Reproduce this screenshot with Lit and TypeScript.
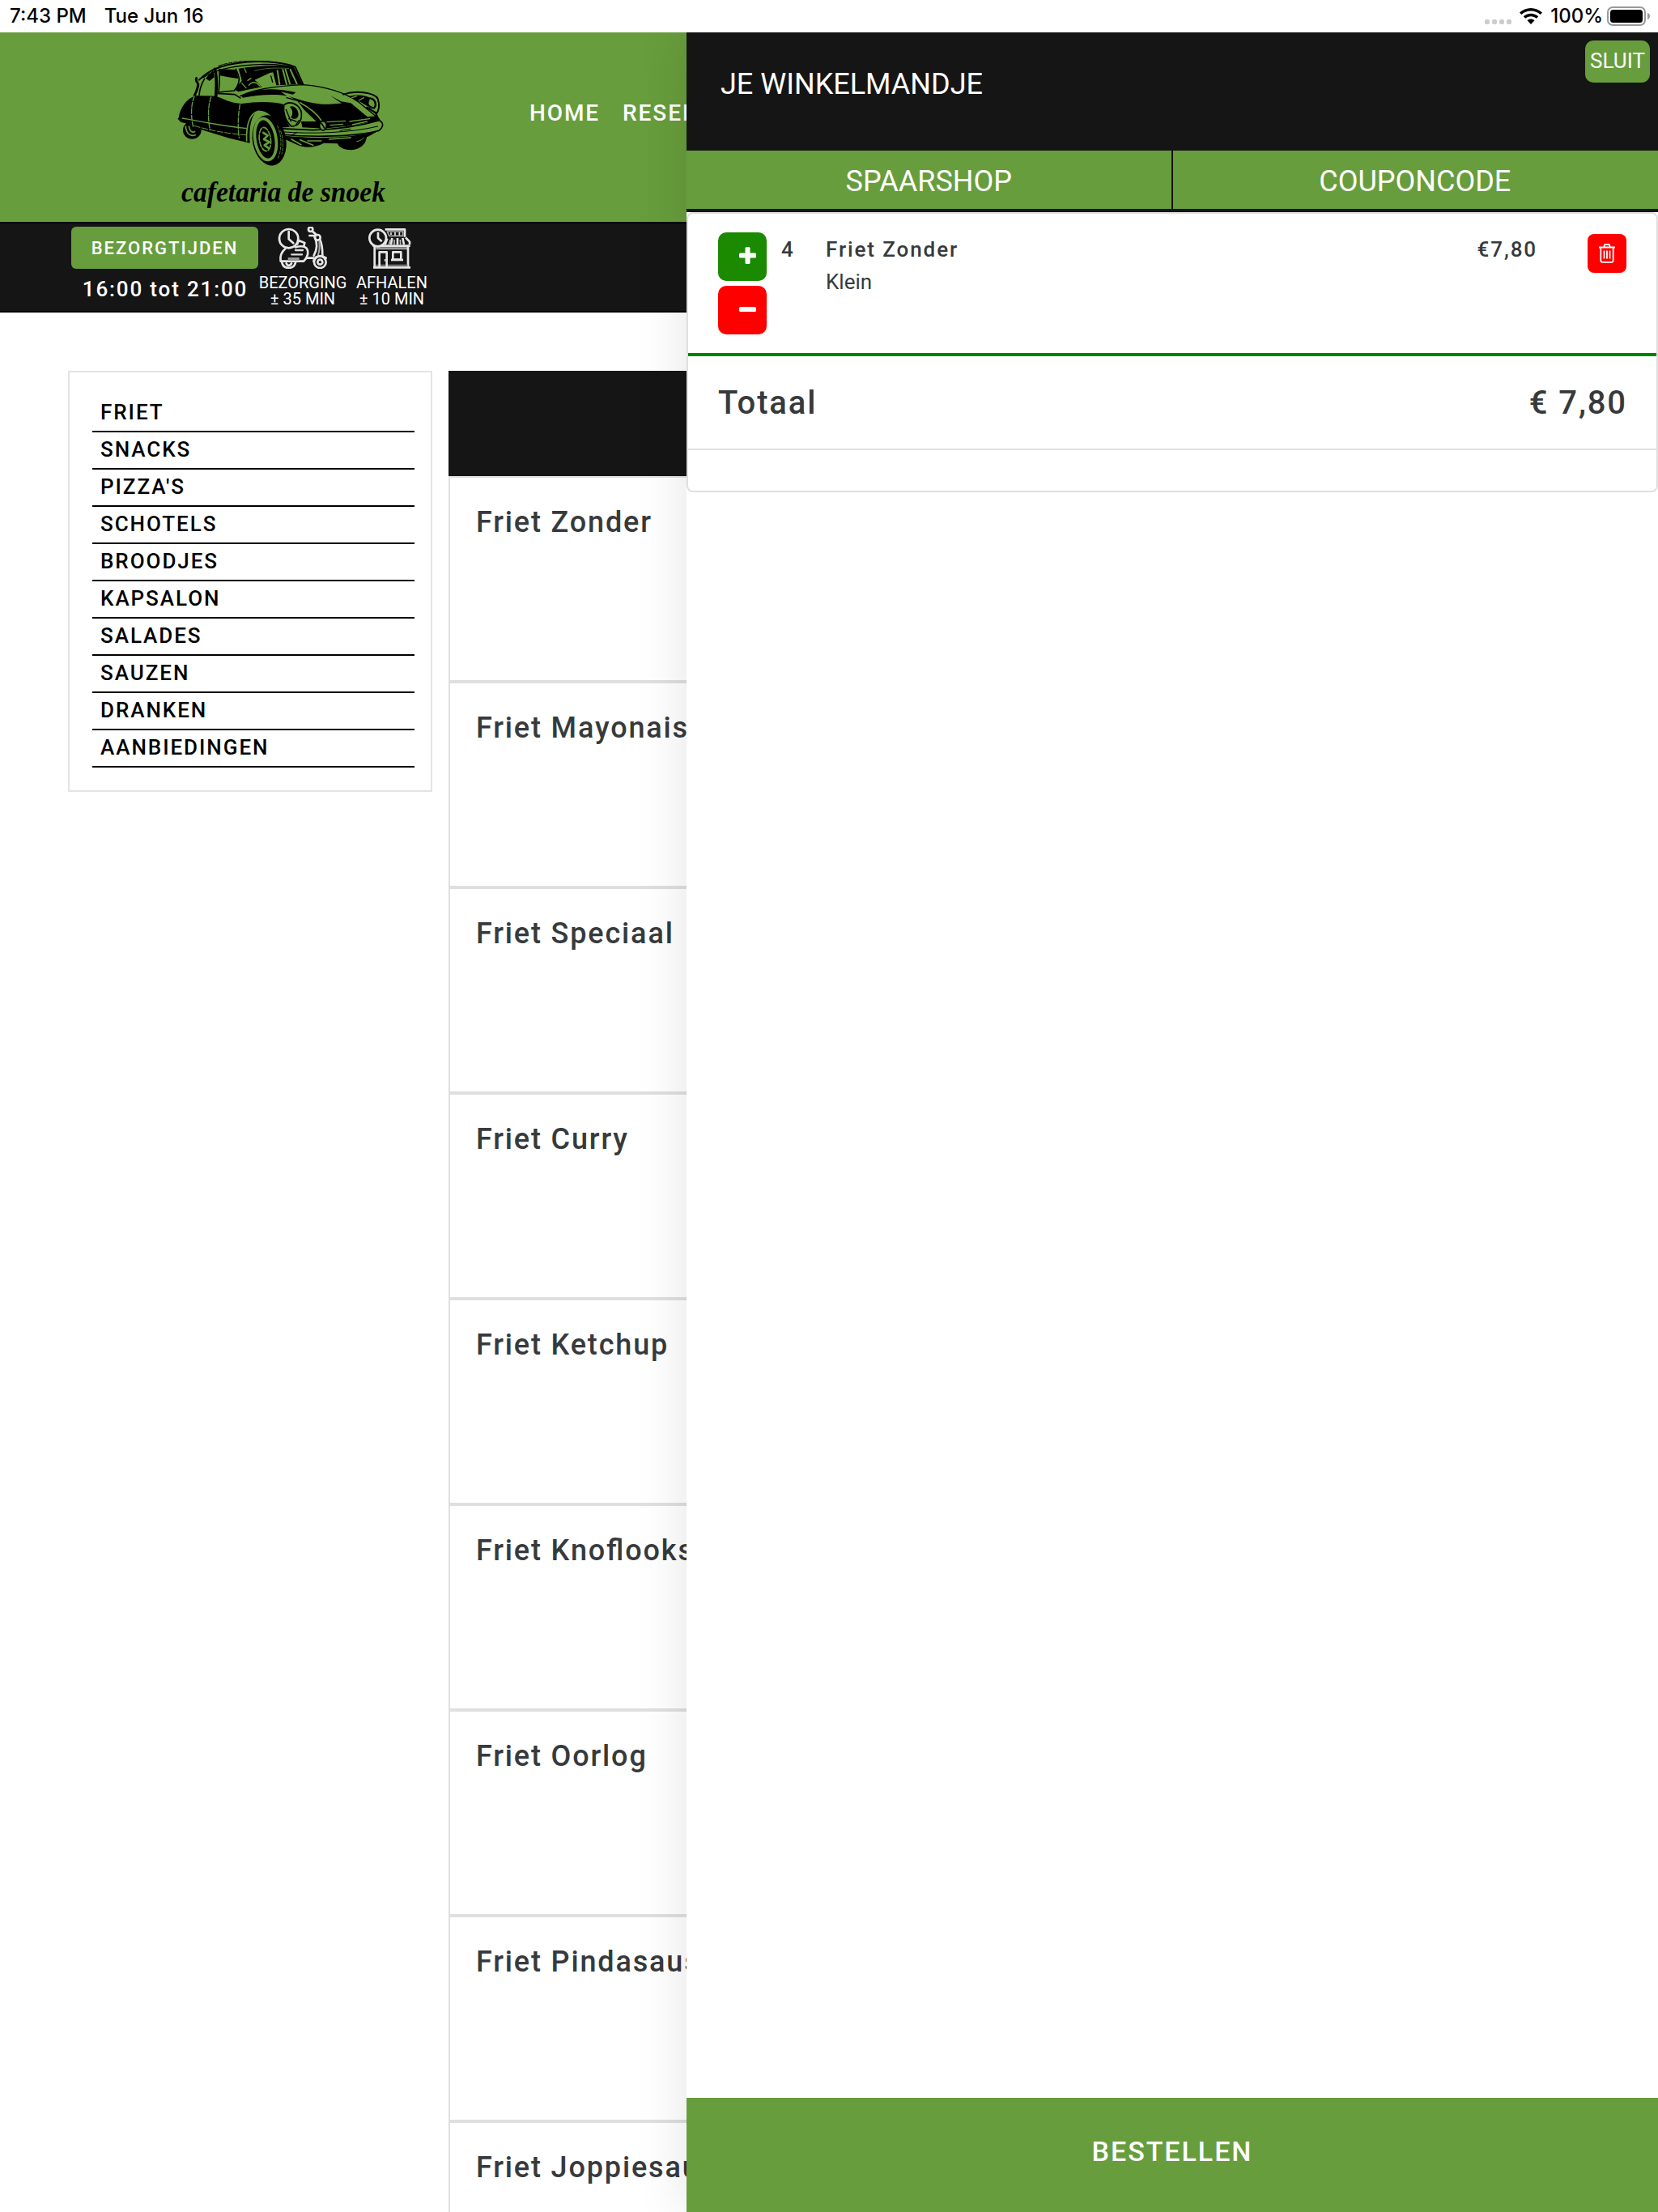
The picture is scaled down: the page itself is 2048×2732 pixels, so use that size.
import { LitElement, css, html, svg } from 'lit';
import { customElement, property } from 'lit/decorators.js';

interface CartLine {
  quantity: number;
  name: string;
  variant: string;
  price: string;
}

const CATEGORIES = [
  'Friet',
  'Snacks',
  "Pizza's",
  'Schotels',
  'Broodjes',
  'Kapsalon',
  'Salades',
  'Sauzen',
  'Dranken',
  'Aanbiedingen',
];

const PRODUCTS = [
  'Friet Zonder',
  'Friet Mayonaise',
  'Friet Speciaal',
  'Friet Curry',
  'Friet Ketchup',
  'Friet Knoflooksaus',
  'Friet Oorlog',
  'Friet Pindasaus',
  'Friet Joppiesaus',
];

const CART: CartLine[] = [{ quantity: 4, name: 'Friet Zonder', variant: 'Klein', price: '€7,80' }];

const scooterIcon = svg`
  <svg class="icon" width="62" height="52" viewBox="24 18 186 156" fill="none" stroke="#e6e6e6" stroke-width="8" stroke-linecap="round" stroke-linejoin="round">
    <circle cx="65" cy="62" r="35" />
    <path d="M65 36V64L82 79" />
    <path d="M97 82L102 69L124 78L121 90" />
    <path d="M52 100C38 112 32 128 35 146H120C134 134 141 112 131 98C122 88 102 90 90 94" />
    <path d="M90 105H117M76 121H114" stroke="#ddd" stroke-width="7" />
    <path d="M62 138H104" stroke="#999" stroke-width="12" stroke-linecap="butt" />
    <path d="M40 152C46 176 82 178 90 152M56 154C60 164 70 164 75 154" />
    <circle cx="146" cy="28" r="8" />
    <path d="M152 35L166 46M142 51H160" />
    <circle cx="172" cy="58" r="10" />
    <path d="M160 54C172 78 172 100 158 125M181 66C190 86 190 106 190 124" />
    <path d="M178 72C180 92 179 108 174 122" stroke="#aaa" stroke-width="6" />
    <path d="M134 134H156" />
    <circle cx="181" cy="149" r="22" />
    <circle cx="181" cy="149" r="9" />
    <path d="M157 146C160 126 184 120 203 134" />
  </svg>
`;

const storeIcon = svg`
  <svg class="icon" width="54" height="52" viewBox="362 18 162 156" fill="none" stroke="#e6e6e6" stroke-width="8" stroke-linejoin="round">
    <path d="M424 28H497V56" />
    <path d="M432 36H490V52H440Z" stroke="#aaa" stroke-width="5" />
    <path d="M446 40V48M461 38V50M477 38V50" stroke-width="5" />
    <path d="M432 62L424 84M450 60L446 84M470 60V84M489 60L494 84M500 58L515 74V84" />
    <path d="M438 84L444 66M458 84V66M481 84L480 66" stroke="#bbb" stroke-width="5" />
    <path d="M378 89H517" />
    <path d="M390 98H508" stroke="#999" stroke-width="9" />
    <path d="M385 90V169M509 90V169M380 169H518" />
    <path d="M390 161H508" stroke="#888" stroke-width="5" />
    <path d="M403 166V112H430V166" />
    <path d="M424 138V146" stroke-width="5" />
    <path d="M453 112H483V140H453Z" />
    <path d="M446 141H491" />
    <circle cx="397" cy="60" r="31" fill="#151515" />
    <path d="M398 38V60L412 73" />
  </svg>
`;

const logo = svg`
  <svg class="logo" width="300" height="220" viewBox="0 0 900 660" fill="none" stroke-linecap="round" stroke-linejoin="round">
    <!-- far wheels -->
    <ellipse cx="112" cy="332" rx="34" ry="33" fill="#000" />
    <path d="M88 318C90 348 108 356 124 350M100 318C102 336 112 342 122 338" stroke="#679d3c" stroke-width="5" />
    <path d="M650 378L760 350C758 382 740 402 700 406C672 405 652 394 650 378Z" fill="#000" />
    <path d="M722 374C736 372 744 366 750 358" stroke="#679d3c" stroke-width="3" />

    <!-- roof and glass -->
    <path d="M138 146C170 112 215 92 280 84C350 72 440 78 494 98L522 160" stroke="#000" stroke-width="6" />
    <path d="M152 138C205 100 300 90 380 88C430 88 470 94 486 104" stroke="#000" stroke-width="4" />
    <path d="M210 94C260 76 350 70 440 84" stroke="#000" stroke-width="3" stroke-dasharray="14 5" />
    <path d="M128 140C122 152 138 156 134 168C130 186 126 194 120 206" stroke="#000" stroke-width="9" />
    <path d="M158 142C148 158 140 178 138 202" stroke="#000" stroke-width="5" />
    <path d="M162 140L190 110L194 136L176 150Z" fill="#000" />
    <path d="M196 106C206 140 202 170 200 206" stroke="#000" stroke-width="11" />
    <path d="M214 106L276 108L284 142L246 136L216 130Z" fill="#000" />
    <path d="M212 106C216 140 212 170 210 192L268 186C282 170 290 150 284 128L274 106" stroke="#000" stroke-width="5" />
    <path d="M284 104C350 94 430 90 488 96L520 162L424 166L412 118L400 120L344 146L372 172L318 182L284 190L268 182L296 150Z" fill="#000" />
    <path d="M346 146L402 122L412 166L370 172Z" fill="#679d3c" />
    <path d="M280 104L292 142M296 158L312 176M306 104L312 118M318 148L330 140M322 166C334 150 350 152 364 170" stroke="#679d3c" stroke-width="4" />
    <path d="M404 132L410 154" stroke="#000" stroke-width="4" />
    <path d="M428 112L436 162M448 108L462 162M458 108L474 160M476 108L500 160" stroke="#679d3c" stroke-width="6" />
    <path d="M344 112C380 102 430 100 470 104" stroke="#679d3c" stroke-width="2" />

    <!-- body side -->
    <path d="M62 288C66 250 92 214 126 204L200 206C226 214 252 232 296 234C350 226 410 224 456 238L452 262L460 296L474 320L430 324C412 282 386 262 360 262C332 268 322 320 326 380L250 362L152 332L66 298Z" fill="#000" />
    <path d="M62 290L72 300L322 350" stroke="#000" stroke-width="6" />
    <path d="M204 196L270 200L292 214" stroke="#000" stroke-width="5" />
    <path d="M120 206C106 240 108 290 116 320M182 210C168 250 172 300 178 330M294 214C282 262 280 320 286 360" stroke="#679d3c" stroke-width="4" stroke-dasharray="18 6" />
    <path d="M76 288C150 302 230 318 316 326" stroke="#679d3c" stroke-width="4" />
    <path d="M120 316C180 334 250 346 312 350" stroke="#679d3c" stroke-width="3" stroke-dasharray="22 7" />
    <path d="M314 372C312 320 322 270 358 262C392 262 416 290 428 322" stroke="#679d3c" stroke-width="5" />

    <!-- bonnet -->
    <path d="M290 206C340 180 440 168 524 164C600 170 672 190 726 226L806 292" stroke="#000" stroke-width="4" />
    <path d="M294 206C340 176 420 174 496 192L486 200L440 190L464 206C410 196 350 204 300 212Z" fill="#000" />
    <path d="M470 206C530 226 570 238 620 236L680 232L736 286L608 298L576 304L528 258L500 222Z" fill="#000" />
    <path d="M624 204L664 226L700 232L768 288L734 288L690 250Z" fill="#000" />
    <path d="M512 230C548 250 574 270 590 296" stroke="#679d3c" stroke-width="5" />
    <path d="M462 212L500 222" stroke="#000" stroke-width="4" />

    <!-- headlights -->
    <path d="M452 240C470 222 504 232 516 262C522 296 506 318 480 318C458 300 448 266 452 240Z" fill="#679d3c" stroke="#000" stroke-width="5" />
    <path d="M474 246C490 238 506 256 506 276C502 292 492 294 478 286C486 270 486 260 474 246Z" fill="#000" />
    <path d="M460 256L478 300M470 290L498 300M508 296L494 316" stroke="#000" stroke-width="4" />
    <path d="M672 200C716 184 786 192 800 216C808 240 804 262 794 272" stroke="#000" stroke-width="6" />
    <path d="M690 208C720 198 752 202 772 212L762 244L740 230Z" fill="#000" />
    <path d="M704 212L722 206M730 222L748 212" stroke="#679d3c" stroke-width="4" />
    <path d="M772 214C792 218 796 240 786 250C774 250 764 242 764 236M760 248L792 268L802 292" stroke="#000" stroke-width="7" />

    <!-- grille and bumper -->
    <path d="M516 300L580 300L600 294L800 280L806 296L700 316L600 326L520 322Z" fill="#000" />
    <path d="M612 302L680 298M624 314L670 310M696 300L770 290M706 312L760 300" stroke="#679d3c" stroke-width="4" />
    <path d="M426 326L560 332C640 330 730 318 806 296C824 306 820 322 804 334C720 356 560 360 440 348Z" fill="#679d3c" stroke="#000" stroke-width="5" />
    <path d="M440 338C560 348 700 342 800 318M480 352L500 340M660 334L700 328" stroke="#000" stroke-width="3" />
    <ellipse cx="597" cy="316" rx="13" ry="17" fill="#679d3c" stroke="#000" stroke-width="5" />
    <path d="M592 308L602 324M684 304V322" stroke="#000" stroke-width="5" />
    <path d="M446 352C560 366 690 364 800 336L764 356L650 382L600 380C570 396 530 400 504 388L456 366Z" fill="#000" />
    <path d="M480 366L516 386M512 368L560 388M540 372L590 372M620 366L700 360" stroke="#679d3c" stroke-width="5" />

    <!-- front wheel -->
    <ellipse cx="398" cy="370" rx="62" ry="94" transform="rotate(-10 398 370)" fill="#000" />
    <ellipse cx="384" cy="366" rx="39" ry="77" transform="rotate(-9 384 366)" stroke="#679d3c" stroke-width="11" />
    <ellipse cx="382" cy="366" rx="21" ry="44" transform="rotate(-8 382 366)" stroke="#679d3c" stroke-width="5" stroke-dasharray="20 6" />
    <path d="M376 342L392 352L378 366L398 376L380 388L394 398" stroke="#679d3c" stroke-width="8" />
    <path d="M428 316C444 352 446 400 430 436M440 336C452 370 450 400 444 420" stroke="#679d3c" stroke-width="2.5" stroke-dasharray="10 6" />

    <text class="logo-text" x="72" y="596" textLength="756" lengthAdjust="spacingAndGlyphs">cafetaria de snoek</text>
  </svg>
`;

/**
 * Tablet status bar with clock, wifi and battery.
 */
@customElement('status-bar')
export class StatusBar extends LitElement {
  static styles = css`
    :host {
      display: flex;
      align-items: center;
      justify-content: space-between;
      box-sizing: border-box;
      height: 40px;
      padding: 0 10px 0 12px;
      background: #fff;
      color: #000;
      font: 500 24px/40px Inter, sans-serif;
    }

    .side {
      display: flex;
      align-items: center;
      height: 40px;
    }

    .clock {
      gap: 22px;
    }

    .label {
      height: 40px;
    }

    .signal {
      display: flex;
      gap: 3px;
      margin: 14px 10px 0 0;
    }

    .dot {
      width: 6px;
      height: 6px;
      border-radius: 2px;
      background: #ccc;
    }

    .wifi {
      margin-right: 10px;
    }

    .battery {
      margin-left: 5px;
    }
  `;

  render() {
    return html`
      <div class="side clock">
        <span class="label">7:43 PM</span>
        <span class="label">Tue Jun 16</span>
      </div>
      <div class="side">
        <div class="signal">
          <span class="dot"></span><span class="dot"></span><span class="dot"></span><span class="dot"></span>
        </div>
        <svg class="wifi" width="28" height="20" viewBox="0 0 28 20">
          <path d="M14 0C8.600 0 3.700 2.100 0 5.500L2.400 8C5.500 5.200 9.500 3.600 14 3.600S22.500 5.200 25.600 8L28 5.500C24.300 2.100 19.400 0 14 0Z" />
          <path d="M14 6.800C10.500 6.800 7.300 8.100 4.800 10.300L7.200 12.800C9 11.200 11.400 10.300 14 10.300S19 11.200 20.800 12.800L23.200 10.300C20.700 8.100 17.500 6.800 14 6.800Z" />
          <path d="M14 13.500C12.300 13.500 10.700 14.100 9.500 15.200L14 20L18.500 15.200C17.300 14.100 15.700 13.500 14 13.500Z" />
        </svg>
        <span class="label">100%</span>
        <svg class="battery" width="53" height="24" viewBox="0 0 53 24">
          <rect x="1" y="1" width="46" height="22" rx="6" fill="none" stroke="#999" stroke-width="2" />
          <rect x="4" y="4" width="40" height="16" rx="3.500" />
          <path d="M50 8C52 8.500 53 10 53 12S52 15.500 50 16Z" fill="#999" />
        </svg>
      </div>
    `;
  }
}

/**
 * Shopping cart drawer that slides over the menu.
 */
@customElement('cart-drawer')
export class CartDrawer extends LitElement {
  @property({ type: Array }) lines: CartLine[] = [];
  @property({ type: String }) total = '';

  static styles = css`
    :host {
      display: flex;
      flex-direction: column;
      background: #fff;
      color: #373a3c;
      box-shadow: 0 0 60px rgba(0, 0, 0, 0.11);
    }

    .header {
      display: flex;
      align-items: flex-start;
      justify-content: space-between;
      box-sizing: border-box;
      height: 146px;
      padding: 10px 10px 0 42px;
      background: #151515;
      color: #fff;
    }

    .title {
      margin: 27px 0 0;
      font-size: 36px;
      font-weight: 400;
      line-height: 54px;
    }

    .close {
      width: 80px;
      height: 52px;
      padding: 0 0 2px;
      border: 0;
      border-radius: 10px;
      background: #679d3c;
      color: #fff;
      font: 400 26px/50px Roboto, sans-serif;
    }

    .tabs {
      display: flex;
      height: 72px;
      border-bottom: 4px solid #151515;
      background: #679d3c;
      color: #fff;
      font-size: 36px;
      line-height: 77px;
      text-align: center;
    }

    .tab {
      flex: 1;
      padding-right: 1px;
    }

    .tab:first-child {
      padding-right: 0;
      border-right: 2px solid #151515;
    }

    .card {
      border: 2px solid #dfdfdf;
      border-radius: 8px;
    }

    .line {
      display: flex;
      align-items: flex-start;
      box-sizing: border-box;
      height: 176px;
      padding: 23px 37px 0;
      border-bottom: 4px solid #008000;
      font-size: 26px;
      line-height: 40px;
    }

    .stepper {
      display: flex;
      flex-direction: column;
      gap: 6px;
      margin-right: 18px;
    }

    .step {
      display: flex;
      width: 60px;
      height: 60px;
      padding: 0;
      border: 0;
      border-radius: 10px;
      background: #1b8a00;
    }

    .step.minus {
      background: #f00;
    }

    .quantity,
    .info,
    .price {
      padding-top: 1px;
      font-weight: 500;
      letter-spacing: 1.9px;
    }

    .quantity {
      width: 55px;
    }

    .info {
      flex: 1;
    }

    .variant {
      font-weight: 400;
      letter-spacing: 0;
    }

    .remove {
      display: flex;
      align-items: center;
      justify-content: center;
      width: 48px;
      height: 48px;
      margin: 2px 0 0 62px;
      padding: 0;
      border: 0;
      border-radius: 8px;
      background: #f00;
    }

    .total {
      display: flex;
      align-items: center;
      justify-content: space-between;
      height: 114px;
      padding: 0 36px 0 37px;
      border-bottom: 2px solid #dfdfdf;
      font-size: 40px;
      font-weight: 500;
      letter-spacing: 1.9px;
    }

    .rest {
      height: 50px;
    }

    .order {
      box-sizing: border-box;
      height: 141px;
      margin-top: auto;
      padding: 0 0 10px;
      border: 0;
      background: #679d3c;
      color: #fff;
      font: 500 34px Roboto, sans-serif;
      letter-spacing: 1.95px;
    }
  `;

  private renderLine(line: CartLine) {
    return html`
      <div class="line">
        <div class="stepper">
          <button class="step">
            <svg width="60" height="60" viewBox="0 0 60 60" fill="#fff">
              <rect x="26" y="25.500" width="21" height="6" rx="1.500" />
              <rect x="33.500" y="18" width="6" height="21" rx="1.500" />
            </svg>
          </button>
          <button class="step minus">
            <svg width="60" height="60" viewBox="0 0 60 60" fill="#fff">
              <rect x="26" y="26" width="21" height="6" rx="1.500" />
            </svg>
          </button>
        </div>
        <div class="quantity">${line.quantity}</div>
        <div class="info">
          <div>${line.name}</div>
          <div class="variant">${line.variant}</div>
        </div>
        <div class="price">${line.price}</div>
        <button class="remove">
          <svg width="20" height="24" viewBox="0 0 20 24" fill="none" stroke="#fff" stroke-width="1.800">
            <path d="M0 4.500H20" stroke-width="2" />
            <path d="M6 4.500L7.300 1H12.700L14 4.500M2.300 5V20.500C2.300 22 3 22.800 4.300 22.800H15.700C17 22.800 17.700 22 17.700 20.500V5" />
            <path d="M6.500 8.500V18.500M10 8.500V18.500M13.500 8.500V18.500" />
          </svg>
        </button>
      </div>
    `;
  }

  render() {
    return html`
      <div class="header">
        <h2 class="title">JE WINKELMANDJE</h2>
        <button class="close">SLUIT</button>
      </div>
      <div class="tabs">
        <div class="tab">SPAARSHOP</div>
        <div class="tab">COUPONCODE</div>
      </div>
      <div class="card">
        ${this.lines.map((line) => this.renderLine(line))}
        <div class="total">
          <span>Totaal</span>
          <span>${this.total}</span>
        </div>
        <div class="rest"></div>
      </div>
      <button class="order">BESTELLEN</button>
    `;
  }
}

@customElement('app-root')
export class AppRoot extends LitElement {
  static styles = css`
    :host {
      display: flex;
      flex-direction: column;
      width: 2048px;
      height: 2732px;
      overflow: hidden;
      background: #fff;
      color: #373a3c;
      font-family: Roboto, sans-serif;
    }

    .page {
      position: relative;
      flex: 1;
      min-height: 0;
      overflow: hidden;
    }

    .header {
      display: flex;
      height: 234px;
      padding-left: 200px;
      background: #679d3c;
    }

    .logo {
      flex: none;
      margin-top: 10px;
    }

    .logo-text {
      fill: #000;
      font: italic 700 108px 'Liberation Serif', serif;
    }

    .nav {
      display: flex;
      gap: 28px;
      margin: 80px 0 0 154px;
      color: #fff;
      font-size: 28px;
      font-weight: 500;
      line-height: 40px;
      letter-spacing: 1.9px;
      white-space: nowrap;
    }

    .times {
      display: flex;
      box-sizing: border-box;
      height: 112px;
      padding: 4px 0 0 88px;
      border: solid #000;
      border-width: 2px 0;
      background: #151515;
      color: #fff;
    }

    .opening {
      width: 231px;
      font-weight: 500;
      letter-spacing: 2px;
      text-align: center;
    }

    .badge {
      height: 52px;
      border-radius: 6px;
      background: #679d3c;
      font-size: 22px;
      line-height: 53px;
    }

    .hours {
      padding-left: 1px;
      font-size: 26px;
      line-height: 50px;
      letter-spacing: 1.85px;
    }

    .method {
      display: flex;
      flex-direction: column;
      align-items: center;
      width: 110px;
      font-size: 20px;
      line-height: 20px;
      text-align: center;
      white-space: nowrap;
    }

    .method .icon {
      display: block;
      margin-bottom: 7px;
    }

    .method + .method {
      width: 88px;
      margin-left: 11px;
    }

    .method + .method .icon {
      margin-right: 4px;
    }

    .content {
      display: flex;
      align-items: flex-start;
      gap: 20px;
      padding: 72px 0 0 84px;
    }

    .categories {
      flex: none;
      box-sizing: border-box;
      width: 450px;
      padding: 28px 20px 28px 28px;
      border: 2px solid #e4e4e4;
      color: #000;
      font-size: 26px;
      font-weight: 500;
      line-height: 43px;
      letter-spacing: 1.95px;
      text-transform: uppercase;
    }

    .category {
      box-sizing: border-box;
      height: 46px;
      padding-left: 10px;
      border-bottom: 2px solid #000;
    }

    .products {
      flex: 1;
    }

    .banner {
      height: 130px;
      background: #151515;
    }

    .product {
      box-sizing: border-box;
      height: 254px;
      padding: 28px 0 0 32px;
      border: 2px solid #dfdfdf;
      font-size: 36px;
      font-weight: 500;
      font-feature-settings: 'liga' 1;
      line-height: 54px;
      letter-spacing: 1.85px;
    }

    .drawer {
      position: absolute;
      top: 0;
      right: 0;
      bottom: 0;
      width: 1200px;
    }
  `;

  render() {
    return html`
      <status-bar></status-bar>
      <div class="page">
        <div class="header">
          ${logo}
          <div class="nav">
            <span>HOME</span>
            <span>RESERVEREN</span>
          </div>
        </div>
        <div class="times">
          <div class="opening">
            <div class="badge">BEZORGTIJDEN</div>
            <div class="hours">16:00 tot 21:00</div>
          </div>
          <div class="method">
            ${scooterIcon}
            <span>BEZORGING</span>
            <span>± 35 MIN</span>
          </div>
          <div class="method">
            ${storeIcon}
            <span>AFHALEN</span>
            <span>± 10 MIN</span>
          </div>
        </div>
        <div class="content">
          <div class="categories">
            ${CATEGORIES.map((name) => html`<div class="category">${name}</div>`)}
          </div>
          <div class="products">
            <div class="banner"></div>
            ${PRODUCTS.map((name) => html`<div class="product">${name}</div>`)}
          </div>
        </div>
        <cart-drawer class="drawer" .lines=${CART} total="€ 7,80"></cart-drawer>
      </div>
    `;
  }
}

declare global {
  interface HTMLElementTagNameMap {
    'status-bar': StatusBar;
    'cart-drawer': CartDrawer;
    'app-root': AppRoot;
  }
}
